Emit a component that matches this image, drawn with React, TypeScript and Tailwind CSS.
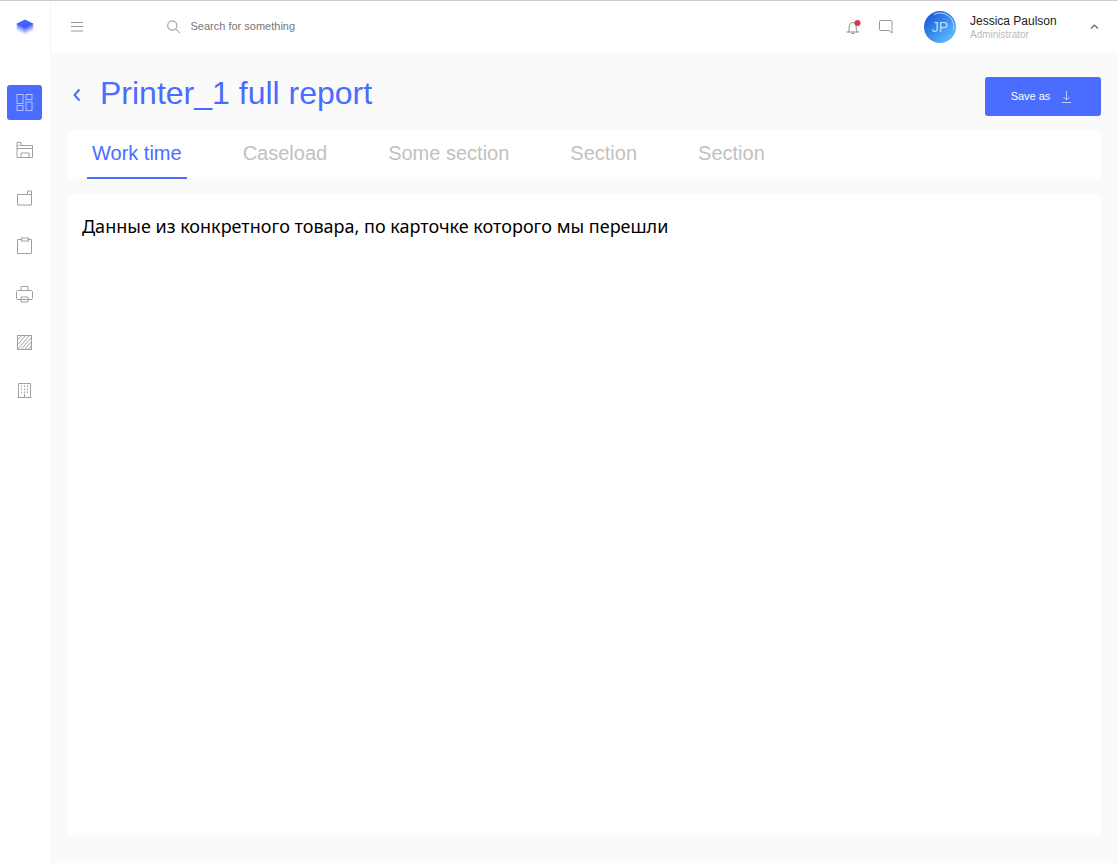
import type { ReactNode } from "react";

const tabs = ["Work time", "Caseload", "Some section", "Section", "Section"];

function Icon({ children }: { children: ReactNode }) {
  return (
    <svg width="18" height="18" viewBox="0 0 18 18" fill="none" stroke="currentColor" aria-hidden="true">
      {children}
    </svg>
  );
}

const navItems = [
  {
    label: "Dashboard",
    icon: (
      <Icon>
        <rect x="2" y="1.5" width="6" height="9" />
        <rect x="11" y="1.5" width="6" height="5" />
        <rect x="2" y="12.5" width="6" height="5" />
        <rect x="11" y="9" width="6" height="8.5" />
      </Icon>
    ),
  },
  {
    label: "Storage",
    icon: (
      <Icon>
        <path d="M2 16.5v-15h4v3h11.5v12z" />
        <path d="M2 7.5h15.500M6 16.5v-4.500h8v4.500" />
        <path d="M2 4.5h4" strokeOpacity="0.6" />
      </Icon>
    ),
  },
  {
    label: "Folders",
    icon: (
      <Icon>
        <path d="M2.5 5.500h10v-3.500h4v14h-14z" />
        <path d="M12.500 5.500h4" />
      </Icon>
    ),
  },
  {
    label: "Tasks",
    icon: (
      <Icon>
        <path d="M6.500 2.500h-4v14h14v-14h-4" />
        <rect x="6.500" y="1" width="7" height="3" />
      </Icon>
    ),
  },
  {
    label: "Printers",
    icon: (
      <Icon>
        <path d="M6 5.500v-4h7v4M6 14.500h-4l-0.500-1v-7l1-1h14l1 1v7l-0.500 1h-4" />
        <path d="M6 12h7v5h-7zM6 14.500h7" />
      </Icon>
    ),
  },
  {
    label: "Materials",
    icon: (
      <Icon>
        <rect x="2.5" y="2.5" width="14" height="14" />
        <path d="M2.500 7l4.500-4.500M2.500 12l8-9.500M2.500 16.500l12-14M6 16.500l10.500-12M10 16.500l6.500-8M13.500 16.500l3-4" />
      </Icon>
    ),
  },
  {
    label: "Buildings",
    icon: (
      <Icon>
        <path d="M3.500 16.500v-14h12v14M2.500 16.500h14" />
        <path d="M6.500 4.500v8M9.500 4.500v8M12.500 4.500v8" strokeDasharray="1.500 1.500" />
        <path d="M9.500 13v3.500" />
      </Icon>
    ),
  },
];

function Sidebar() {
  return (
    <aside className="flex w-[51px] shrink-0 flex-col border-r border-[#f8f8f8] bg-white pr-px">
      <a href="#" aria-label="Home" className="flex h-[51px] items-center justify-center">
        <svg width="18" height="16" viewBox="0 0 18 16" aria-hidden="true">
          <path d="M9 6l9 5-9 4.500L0 11z" fill="#dbe1ff" />
          <path d="M9 4l9 5-9 4.500L0 9z" fill="#a5b4ff" />
          <path d="M9 2l9 5-9 4.500L0 7z" fill="#758dff" />
          <path d="M9 0.500l9 4.500L9 9.500 0 5z" fill="#4064fb" />
        </svg>
      </a>
      <nav className="mt-[33px] flex flex-col items-center gap-[13px]">
        {navItems.map((item, i) => (
          <a
            key={item.label}
            href="#"
            aria-label={item.label}
            className={
              i === 0
                ? "size-[35px] rounded-[3px] bg-[#4a6cff] p-2 text-[#b3c1ff]"
                : "size-[35px] p-2 text-[#a0a0a0]"
            }
          >
            {item.icon}
          </a>
        ))}
      </nav>
    </aside>
  );
}

function Header() {
  return (
    <header className="flex h-[51px] items-center bg-white pr-[18px] pl-5">
      <button type="button" aria-label="Menu" className="text-[#999]">
        <svg width="12" height="12" viewBox="0 0 12 12" stroke="currentColor" aria-hidden="true">
          <path d="M0 1.500h12M0 5.500h12M0 10h12" />
        </svg>
      </button>
      <label className="ml-[84px] flex flex-1 items-center gap-[10px] text-[#888]">
        <svg width="14" height="14" viewBox="0 0 14 14" fill="none" stroke="currentColor" aria-hidden="true">
          <circle cx="5.500" cy="5.500" r="4.800" />
          <path d="M9 9l4.500 4.500" />
        </svg>
        <input
          type="text"
          aria-label="Search"
          placeholder="Search for something"
          className="w-full pb-0.5 text-[11px] leading-4 outline-none placeholder:text-[#777]"
        />
      </label>
      <button type="button" aria-label="Notifications" className="text-[#888]">
        <svg width="16" height="16" viewBox="0 0 16 16" fill="none" stroke="currentColor" aria-hidden="true">
          <path d="M0.500 13h12.500M2 13c1-1 1.200-2 1.200-4.500 0-3 1.300-5 3.500-5s3.500 2 3.500 5c0 2.500 0.200 3.500 1.300 4.500M5.500 14.500h2.500" />
          <circle cx="11.500" cy="4" r="3" fill="#e0364f" stroke="none" />
        </svg>
      </button>
      <button type="button" aria-label="Messages" className="ml-4 text-[#999]">
        <svg width="16" height="16" viewBox="0 0 16 16" fill="none" stroke="currentColor" aria-hidden="true">
          <path d="M2.500 1.500h10.500q1 0 1 1v11.500l-3-2.500h-8.500q-1 0-1-1v-8q0-1 1-1z" />
        </svg>
      </button>
      <button type="button" className="ml-[30px] flex items-center pt-px text-left">
        <span className="relative flex size-8 items-center justify-center rounded-full bg-linear-to-br from-[#1d45d5] to-[#6bccff] text-sm text-[#b9dcff]">
          JP
          <svg className="absolute inset-0" width="32" height="32" viewBox="0 0 32 32" fill="none" stroke="#b5d5ff" aria-hidden="true">
            <path d="M10 3.500A13.800 13.800 0 0 1 29.500 19" />
          </svg>
        </span>
        <span className="ml-[14px] flex w-[120px] flex-col pt-px">
          <span className="text-xs leading-[14px] text-[#222]">Jessica Paulson</span>
          <span className="text-[10px] leading-[14px] text-[#bbb]">Administrator</span>
        </span>
        <svg width="10" height="8" viewBox="0 0 10 8" fill="none" stroke="#666" strokeWidth="1.200" aria-hidden="true">
          <path d="M1 5.500L4.500 2 8 5.500" />
        </svg>
      </button>
    </header>
  );
}

export default function App() {
  return (
    <div className="flex min-h-screen border-t border-[#ccc] bg-[#fafafa] font-['Liberation_Sans',Arial,sans-serif]">
      <Sidebar />
      <div className="flex min-w-0 flex-1 flex-col">
        <Header />
        <main className="flex flex-1 flex-col px-[17px] pt-[25px] pb-7">
          {/* Title and save button */}
          <div className="flex items-start">
            <a href="#" aria-label="Back" className="mt-[11px] ml-1 text-[#4a6cff]">
              <svg width="10" height="14" viewBox="0 0 10 14" fill="none" stroke="currentColor" strokeWidth="2" aria-hidden="true">
                <path d="M7.500 1.500L2.500 7l5 5.500" />
              </svg>
            </a>
            <h1 className="ml-[18px] flex-1 text-[32px] leading-8 text-[#4a6cff]">Printer_1 full report</h1>
            <button
              type="button"
              className="flex h-[39px] w-[116px] items-center justify-center gap-3 rounded-[3px] bg-[#4a6cff] pr-1 text-[11px] text-white"
            >
              Save as
              <svg width="9" height="14" viewBox="0 0 9 14" fill="none" stroke="#c3ceff" aria-hidden="true">
                <path d="M4.500 1v9M1.500 7l3 3 3-3M0 12.500h9" />
              </svg>
            </button>
          </div>

          {/* Tabs */}
          <div role="tablist" className="mt-[14px] flex h-[49px] gap-[51px] rounded-[3px] bg-white pl-[19px]">
            {tabs.map((tab, i) => (
              <button
                key={i}
                type="button"
                role="tab"
                aria-selected={i === 0}
                className={
                  i === 0
                    ? "border-b-2 border-[#4a6cff] px-[5px] pb-0.5 text-xl text-[#4a6cff]"
                    : "border-b-2 border-transparent px-[5px] pb-0.5 text-xl text-[#c1c1c1]"
                }
              >
                {tab}
              </button>
            ))}
          </div>

          {/* Report content */}
          <section className="mt-[15px] flex-1 rounded-[3px] bg-white px-[14px] py-5">
            <p className="font-['Noto_Sans',sans-serif] text-lg leading-6 text-black">
              Данные из конкретного товара, по карточке которого мы перешли
            </p>
          </section>
        </main>
      </div>
    </div>
  );
}
